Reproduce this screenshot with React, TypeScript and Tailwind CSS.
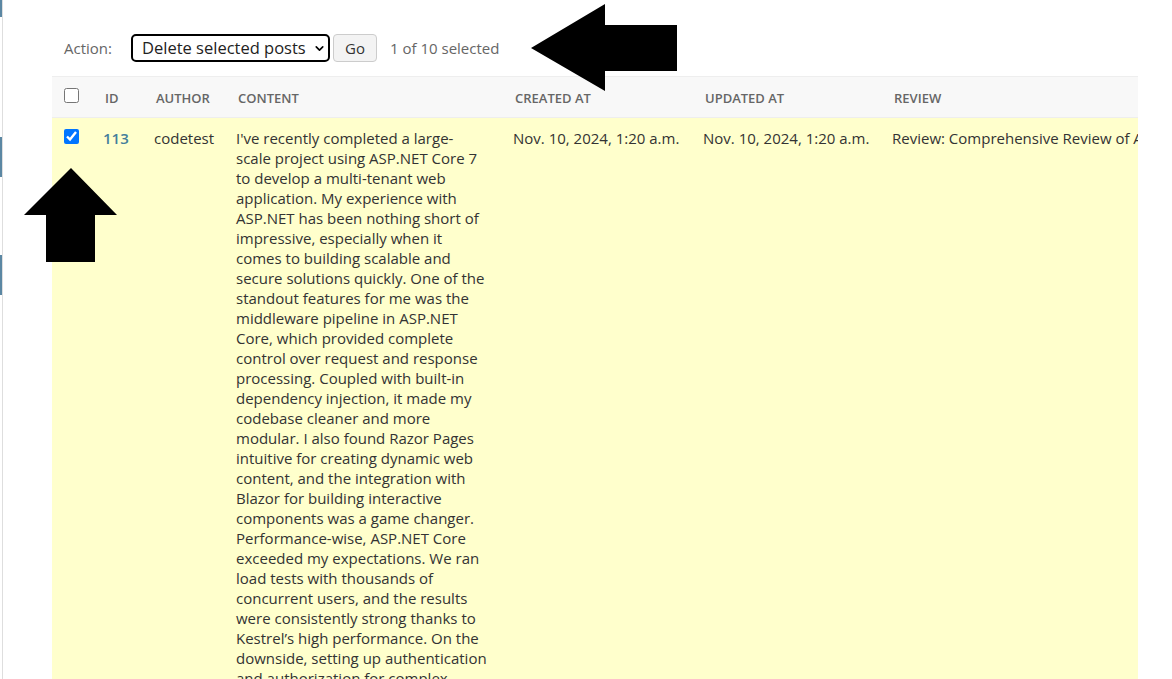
import React from "react"
import { ChevronDown } from "lucide-react"

const contentLines = [
  "I've recently completed a large-",
  "scale project using ASP.NET Core 7",
  "to develop a multi-tenant web",
  "application. My experience with",
  "ASP.NET has been nothing short of",
  "impressive, especially when it",
  "comes to building scalable and",
  "secure solutions quickly. One of the",
  "standout features for me was the",
  "middleware pipeline in ASP.NET",
  "Core, which provided complete",
  "control over request and response",
  "processing. Coupled with built-in",
  "dependency injection, it made my",
  "codebase cleaner and more",
  "modular. I also found Razor Pages",
  "intuitive for creating dynamic web",
  "content, and the integration with",
  "Blazor for building interactive",
  "components was a game changer.",
  "Performance-wise, ASP.NET Core",
  "exceeded my expectations. We ran",
  "load tests with thousands of",
  "concurrent users, and the results",
  "were consistently strong thanks to",
  "Kestrel’s high performance. On the",
  "downside, setting up authentication",
  "and authorization for complex",
]

const headers = [
  { label: "ID", w: "w-[51px]" },
  { label: "Author", w: "w-[82px]" },
  { label: "Content", w: "w-[277px]" },
  { label: "Created at", w: "w-[190px]" },
  { label: "Updated at", w: "w-[189px]" },
  { label: "Review", w: "w-[254px]" },
]

const App = () => {
  return (
    <div className="relative flex h-[679px] w-[1172px] overflow-hidden bg-white font-['Open_Sans',sans-serif] text-[15px] text-[#333]">
      {/* sliver of the admin sidebar */}
      <div className="flex w-[3px] shrink-0 flex-col border-r border-[#dedede]">
        <div className="h-[17px] w-[2px] bg-[#5b87a3]" />
        <div className="mt-[120px] h-[40px] w-[2px] bg-[#5b87a3]" />
        <div className="mt-[78px] h-[40px] w-[2px] bg-[#5b87a3]" />
      </div>

      <div className="flex flex-col pl-[49px] pt-[34px]">
        {/* action bar */}
        <div className="flex h-[28px] items-center text-[#666]">
          <span className="ml-[12px] w-[67px]">Action:</span>
          <div className="relative">
            <select className="h-[28px] w-[199px] appearance-none rounded-[5px] border-2 border-black bg-white pl-[9px] text-[16.5px] text-[#222] outline-none">
              <option>Delete selected posts</option>
            </select>
            <ChevronDown className="pointer-events-none absolute right-[4px] top-[8px] h-[13px] w-[13px] text-black" strokeWidth={3} />
          </div>
          <button className="ml-[3px] h-[28px] w-[44px] rounded-[4px] border border-[#ccc] bg-[#f3f3f3] text-[15px] text-[#333]">
            Go
          </button>
          <span className="ml-[13px] text-[#666]">1 of 10 selected</span>
        </div>

        {/* changelist table */}
        <div className="mt-[14px] w-[1086px] overflow-hidden">
          <table className="w-[1086px] table-fixed border-collapse">
            <thead>
              <tr className="h-[41px] border-y border-[#eee] bg-[#f8f8f8]">
                <th className="w-[43px] pl-[12px] text-left align-middle">
                  <input type="checkbox" className="mt-[3px] h-[15px] w-[15px] accent-[#0075ff]" />
                </th>
                {headers.map((h) => (
                  <th
                    key={h.label}
                    className={`${h.w} pl-[10px] pt-[3px] text-left align-middle text-[13px] font-semibold uppercase text-[#666]`}
                  >
                    {h.label}
                  </th>
                ))}
              </tr>
            </thead>
            <tbody>
              <tr className="bg-[#ffffcc] align-top leading-[20px]">
                <td className="pl-[12px] pt-[10px]">
                  <input type="checkbox" defaultChecked className="h-[15px] w-[15px] accent-[#0075ff]" />
                </td>
                <td className="pl-[8px] pt-[10px] font-semibold text-[#447e9b]">113</td>
                <td className="pl-[8px] pt-[10px]">codetest</td>
                <td className="pl-[8px] pt-[10px]">
                  {contentLines.map((line, i) => (
                    <div key={i} className="whitespace-nowrap">
                      {line}
                    </div>
                  ))}
                </td>
                <td className="whitespace-nowrap pl-[8px] pt-[10px]">Nov. 10, 2024, 1:20 a.m.</td>
                <td className="whitespace-nowrap pl-[8px] pt-[10px]">Nov. 10, 2024, 1:20 a.m.</td>
                <td className="overflow-hidden whitespace-nowrap pl-[8px] pt-[10px]">
                  Review: Comprehensive Review of ASP.NET Core 7
                </td>
              </tr>
            </tbody>
          </table>
        </div>
      </div>

      {/* annotation arrows */}
      <svg className="pointer-events-none absolute left-0 top-0" width="1172" height="679">
        <polygon points="531,48 605,4 605,25 677,25 677,71 605,71 605,91" fill="black" />
        <polygon points="71,168 117,215 95,215 95,262 46,262 46,215 24,215" fill="black" />
      </svg>
    </div>
  )
}

export default App
